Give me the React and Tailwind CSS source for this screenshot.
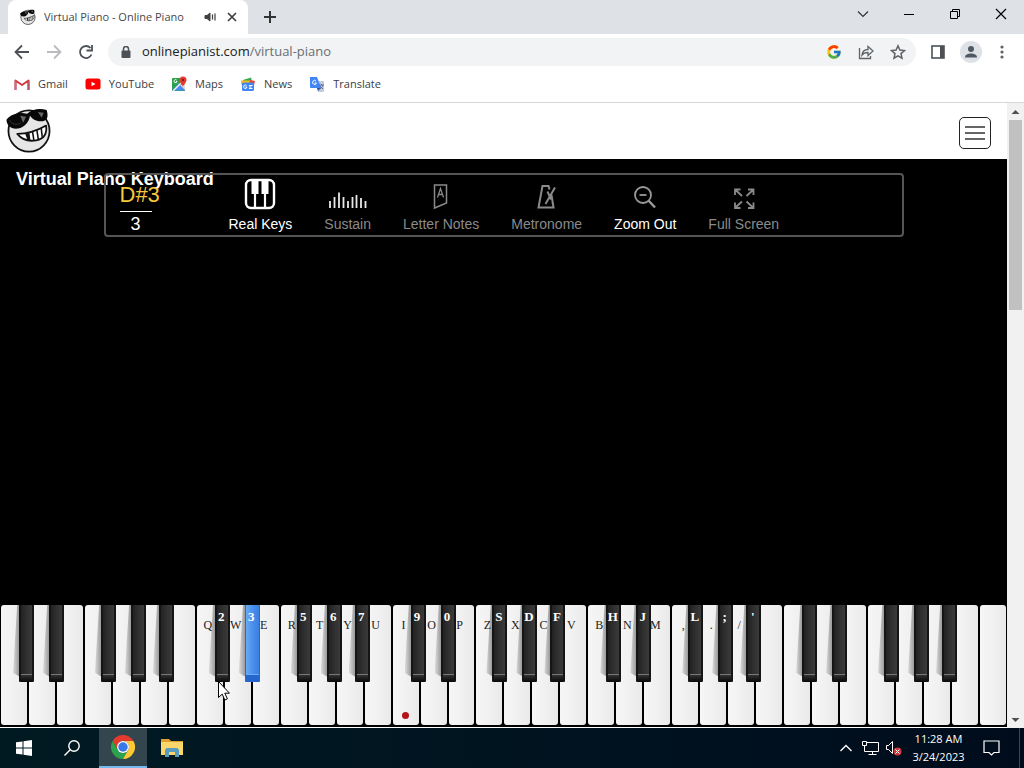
import React from 'react';
import { FcGoogle } from 'react-icons/fc';

const bookmarks = [
  { label: 'Gmail', icon: 'gmail' },
  { label: 'YouTube', icon: 'youtube' },
  { label: 'Maps', icon: 'maps' },
  { label: 'News', icon: 'news' },
  { label: 'Translate', icon: 'translate' },
];

const tools = [
  { label: 'Real Keys', icon: 'keys', active: true },
  { label: 'Sustain', icon: 'sustain' },
  { label: 'Letter Notes', icon: 'letters' },
  { label: 'Metronome', icon: 'metronome' },
  { label: 'Zoom Out', icon: 'zoom', active: true },
  { label: 'Full Screen', icon: 'full' },
];

const NOTES = ['C', 'D', 'E', 'F', 'G', 'A', 'B'];

// where the black key starts, measured from its white key
const SHARP_OFFSET = {
  C: 'left-[18px]',
  D: 'left-[20px]',
  F: 'left-[16px]',
  G: 'left-[18px]',
  A: 'left-[18px]',
};

// keyboard shortcuts start on the second octave
const WHITE_LABELS = ['Q', 'W', 'E', 'R', 'T', 'Y', 'U', 'I', 'O', 'P', 'Z', 'X', 'C', 'V', 'B', 'N', 'M', ',', '.', '/'];
const SHARP_LABELS = ['2', '3', '', '5', '6', '7', '', '9', '0', '', 'S', 'D', 'F', '', 'H', 'J', '', 'L', ';', "'"];

const keys = Array.from({ length: 36 }, (_, i) => ({
  id: i,
  note: NOTES[i % 7],
  octave: 2 + Math.floor(i / 7),
  label: WHITE_LABELS[i - 7] || '',
  sharpLabel: SHARP_LABELS[i - 7] || '',
  pressed: i === 8,
  middle: i === 14,
}));

const PianistLogo = ({ className }) => (
  <svg className={className} viewBox="6 7 46 47" fill="none">
    <circle cx="29" cy="31.500" r="21" fill="#e6e6e6" stroke="#111" strokeWidth="1.800" />
    <path d="M17 34.500c10 0 20-3 29.500-8.500 1 8-2 13.500-10 15-8 1.500-15-1-19.500-6.500z" fill="#fff" stroke="#111" strokeWidth="1.800" strokeLinejoin="round" />
    <path d="M32.500 31.500l1.500 9.500M37 30l1.500 10M41.500 28.500l1 9" stroke="#111" strokeWidth="1.600" />
    <path d="M25 34l4.500-.5 1 8-3-.5z" fill="#111" />
    <path d="M6 20C11 14 19 12 27 14c5-5 13-6 20-4 2 6 1 11-4 11.500-5 .5-10-1-13-5.500-1 7-6 12-12 13-8 1-12-4-12-9z" fill="#080808" />
    <path d="M20 16l6 1-3 6zM38 12l6 1-2 5z" fill="#666" />
    <path d="M9 20c2 5 8 6 12 3" stroke="#333" />
  </svg>
);

const BookmarkIcon = ({ name }) => {
  if (name === 'gmail') {
    return (
      <svg className="size-4" viewBox="0 0 16 16" fill="none">
        <path d="M1.500 14V4.500L8 9l6.500-4.500V14" stroke="#d93a3f" strokeWidth="2" strokeLinejoin="round" />
        <path d="M1.500 14V5.500" stroke="#b8768c" strokeWidth="2" />
        <path d="M14.500 14V5.500" stroke="#b05a6a" strokeWidth="2" />
      </svg>
    );
  }
  if (name === 'youtube') {
    return (
      <svg className="size-4" viewBox="0 0 16 16">
        <rect x="0.500" y="2.500" width="15" height="11" rx="2.500" fill="#f00" />
        <path d="M6.500 5.700v4.600l4-2.300z" fill="#fff" />
      </svg>
    );
  }
  if (name === 'maps') {
    return (
      <svg className="size-4" viewBox="0 0 16 16">
        <rect x="1" y="2" width="13" height="13" rx="1" fill="#2ba24c" />
        <path d="M1 14.500L8 7l6.500 7.500z" fill="#4a8af4" />
        <path d="M2 15L13 4" stroke="#f4f4f4" strokeWidth="1.500" />
        <path d="M9 9l5 5V8z" fill="#ddd" />
        <path d="M5.500 4A1.500 1.500 0 106 5.500H5" fill="none" stroke="#fff" />
        <path d="M12 11c0-2-3.500-4-3.500-7a3.500 3.500 0 017 0c0 3-3.500 5-3.500 7z" fill="#e33b2e" />
        <circle cx="12" cy="4" r="1.200" fill="#8c1a12" />
      </svg>
    );
  }
  if (name === 'news') {
    return (
      <svg className="size-4" viewBox="0 0 16 16">
        <path d="M3 4l8-2.500 1 4H3z" fill="#35a853" />
        <path d="M1 4.500h12v4H1z" fill="#f6bc1c" />
        <path d="M10 4l5 1-1 4H9z" fill="#e04a3c" />
        <rect x="2" y="6.500" width="12" height="8.500" rx="1.500" fill="#4285f4" />
        <path d="M6.500 9.500A1.700 1.700 0 107 11H5.500M9 9.500h3.500M9 11h2.500M9 12.500h3.500" fill="none" stroke="#fff" />
      </svg>
    );
  }
  return (
    <svg className="size-4" viewBox="0 0 16 16">
      <path d="M6 5h8a1 1 0 011 1v9a1 1 0 01-1 1h-5z" fill="#c3cae0" />
      <path d="M1 1h7l4 11H2a1 1 0 01-1-1z" fill="#4285f4" />
      <path d="M8 12h4l-3 3z" fill="#2c56a8" />
      <path d="M7 5A2 2 0 107.500 7H5.500" fill="none" stroke="#fff" />
      <path d="M10 9h5M12.500 8v1M14 9c0 2-2 3-3 4M11 10l3 3" fill="none" stroke="#5f6f9c" />
    </svg>
  );
};

const ToolIcon = ({ name }) => {
  switch (name) {
    case 'keys':
      return (
        <svg className="h-8 w-8" viewBox="0 0 32 32" fill="none">
          <rect x="2" y="2" width="28" height="28" rx="5" stroke="currentColor" strokeWidth="2.400" />
          <path d="M7.500 2h7v14h-7zM17.500 2h7v14h-7z" fill="currentColor" />
          <path d="M11 15v14M21 15v14" stroke="currentColor" strokeWidth="2.200" />
        </svg>
      );
    case 'sustain':
      return (
        <svg className="h-5 w-10" viewBox="0 0 40 20" stroke="#e8e8e8" strokeWidth="1.800">
          <path d="M2 11v7M6.500 7v11M11 2.500V18M15.500 7v11M20 11v7M24.500 7v11M28.500 5v13M33 8v10M37.500 11v7" />
        </svg>
      );
    case 'letters':
      return (
        <svg className="h-7 w-7" viewBox="0 0 28 28" fill="none" stroke="currentColor">
          <path d="M7.500 3h12v18l-12 5z" strokeWidth="1.500" />
          <path d="M10.500 15.500l3-9 3 9M11.500 12.500h4" strokeWidth="1.300" />
        </svg>
      );
    case 'metronome':
      return (
        <svg className="h-7 w-7" viewBox="0 0 28 28" fill="none" stroke="currentColor" strokeWidth="2">
          <path d="M16.500 7.500L15.500 4h-6L5.500 25.500h15L18.500 13M12.500 22L22 5.500M14.500 9.500l3.500 8" />
        </svg>
      );
    case 'zoom':
      return (
        <svg className="h-7 w-7" viewBox="0 0 28 28" fill="none" stroke="#999" strokeWidth="1.800">
          <circle cx="12" cy="13" r="8" />
          <path d="M8.500 13h7" />
          <path d="M17.500 18.500l6.500 7" strokeWidth="2.500" />
        </svg>
      );
    default:
      return (
        <svg className="h-7 w-7" viewBox="0 0 28 28" fill="none" stroke="currentColor" strokeWidth="1.800">
          <path d="M5 13V7.500h5.500M5 7.500l7 6.500M18 7.500h5.500V13M23.500 7.500l-7 6.500M5 20.500V26h5.500M5 26l7-6.500M23.500 20.500V26H18M23.500 26l-7-6.500" />
        </svg>
      );
  }
};

const TabStrip = () => (
  <div className="flex h-[34px] shrink-0 items-stretch bg-[#dee1e6] pl-2">
    <div className="flex w-60 items-center rounded-t-lg bg-white pr-2 pl-3">
      <PianistLogo className="mr-2 size-4 shrink-0" />
      <span className="flex-1 overflow-hidden whitespace-nowrap text-[11px] text-[#45494d]">
        Virtual Piano - Online Piano
      </span>
      <svg className="mr-2 ml-2 size-3 shrink-0" viewBox="0 0 12 12" fill="none" stroke="#3c4043">
        <path d="M1 4.500h2L6 2v8L3 7.500H1z" fill="#3c4043" />
        <path d="M8.500 3.500v5M11 2.500v7" strokeWidth="1.200" />
      </svg>
      <button aria-label="Close tab" className="flex size-4 items-center justify-center">
        <svg className="size-3" viewBox="0 0 12 12" stroke="#3c4043" strokeWidth="1.700">
          <path d="M2 2l8 8M10 2l-8 8" />
        </svg>
      </button>
    </div>
    <button aria-label="New tab" className="flex w-11 items-center justify-center">
      <svg className="size-3" viewBox="0 0 12 12" stroke="#333" strokeWidth="2">
        <path d="M6 0v12M0 6h12" />
      </svg>
    </button>
    <div className="ml-auto flex items-center pb-1.5">
      <button aria-label="Search tabs" className="flex w-[46px] justify-center">
        <svg className="size-3" viewBox="0 0 12 12" fill="none" stroke="#333" strokeWidth="1.200">
          <path d="M1 3.500l5 5 5-5" />
        </svg>
      </button>
      <button aria-label="Minimize" className="flex w-[46px] justify-center">
        <svg className="size-3" viewBox="0 0 12 12" stroke="#000">
          <path d="M1 6.500h10" />
        </svg>
      </button>
      <button aria-label="Restore" className="flex w-[46px] justify-center">
        <svg className="size-3" viewBox="0 0 12 12" fill="none" stroke="#000">
          <path d="M1.500 3.500h7v7h-7zM3.500 3.500v-2h7v7h-2" />
        </svg>
      </button>
      <button aria-label="Close" className="flex w-[46px] justify-center">
        <svg className="size-3" viewBox="0 0 12 12" stroke="#000" strokeWidth="1.200">
          <path d="M1 1l10 10M11 1L1 11" />
        </svg>
      </button>
    </div>
  </div>
);

const AddressBar = () => (
  <div className="flex h-9 shrink-0 items-center px-3.5">
    <div className="flex items-center gap-4">
      <button aria-label="Back">
        <svg className="size-4" viewBox="0 0 16 16" fill="none" stroke="#4d5156" strokeWidth="1.800">
          <path d="M15 8H2M8 1.500L1.500 8 8 14.500" />
        </svg>
      </button>
      <button aria-label="Forward">
        <svg className="size-4" viewBox="0 0 16 16" fill="none" stroke="#b9bbbe" strokeWidth="1.800">
          <path d="M1 8h13M8 1.500L14.500 8 8 14.500" />
        </svg>
      </button>
      <button aria-label="Reload">
        <svg className="size-4" viewBox="0 0 16 16" fill="none" stroke="#4d5156" strokeWidth="1.800">
          <path d="M13.500 10.500A6 6 0 1112.500 4M14 1v5.500H8.500" />
        </svg>
      </button>
    </div>
    <div className="ml-3.5 flex h-7 flex-1 items-center rounded-full bg-[#f1f3f4] pr-2.5 pl-3">
      <svg className="size-3" viewBox="0 0 12 12" fill="none">
        <rect x="1.500" y="4.500" width="9" height="7.500" rx="1" fill="#4d5156" />
        <path d="M3.500 5V3a2.500 2.500 0 015 0v2" stroke="#4d5156" strokeWidth="1.500" />
      </svg>
      <a href="#address" className="ml-2.5 flex-1 text-[13px] text-[#202124]">
        onlinepianist.com<span className="text-[#6a6e73]">/virtual-piano</span>
      </a>
      <div className="flex items-center gap-4">
        <button aria-label="Search with Google">
          <FcGoogle className="size-4" />
        </button>
        <button aria-label="Share">
          <svg className="size-4" viewBox="0 0 16 16" fill="none" stroke="#5f6368" strokeWidth="1.300">
            <path d="M1.500 4v10.500h11V12M4 11c.5-4 3-5.500 6-5.500V2.500L15 7l-5 4.500V8.500c-3 0-4.500.5-6 2.500z" />
          </svg>
        </button>
        <button aria-label="Bookmark this tab">
          <svg className="size-4" viewBox="0 0 16 16" fill="none" stroke="#5f6368" strokeWidth="1.500">
            <path d="M8 1.800l1.900 4.300 4.600.4-3.500 3.100 1 4.600L8 11.800l-4 2.400 1-4.600L1.500 6.500l4.600-.4z" />
          </svg>
        </button>
      </div>
    </div>
    <div className="ml-3.5 flex items-center">
      <button aria-label="Side panel">
        <svg className="size-4" viewBox="0 0 16 16" fill="none">
          <rect x="2" y="2" width="12" height="12" stroke="#4d5156" strokeWidth="1.600" />
          <path d="M10 2h4v12h-4z" fill="#4d5156" />
        </svg>
      </button>
      <button aria-label="Profile" className="ml-3.5 flex size-[22px] items-center justify-center rounded-full bg-[#dee1e6]">
        <svg className="size-4" viewBox="0 0 16 16" fill="#4d5a66">
          <circle cx="8" cy="5" r="3" />
          <path d="M2 13.500c0-3 3-4 6-4s6 1 6 4z" />
        </svg>
      </button>
      <button aria-label="Menu" className="ml-3">
        <svg className="size-4" viewBox="0 0 16 16" fill="#5f6368">
          <circle cx="8" cy="3" r="1.600" />
          <circle cx="8" cy="8" r="1.600" />
          <circle cx="8" cy="13" r="1.600" />
        </svg>
      </button>
    </div>
  </div>
);

const BookmarkBar = () => (
  <nav className="flex h-[33px] shrink-0 items-center gap-[17px] border-b border-[#d5d7da] px-3.5 pb-1">
    {bookmarks.map((item) => (
      <a key={item.label} href={`#${item.icon}`} className="flex items-center gap-2 text-[11px] text-[#3c4043]">
        <BookmarkIcon name={item.icon} />
        {item.label}
      </a>
    ))}
  </nav>
);

const SiteHeader = () => (
  <header className="flex h-14 shrink-0 items-center justify-between bg-white pr-4 pl-1.5">
    <a href="#home" aria-label="Online Pianist" className="pb-0.5">
      <PianistLogo className="size-[46px]" />
    </a>
    <button aria-label="Open menu" className="mt-1 flex size-8 items-center justify-center rounded-[5px] border border-[#222]">
      <svg className="size-5" viewBox="0 0 20 20" stroke="#333" strokeWidth="1.500">
        <path d="M0 4h20M0 10h20M0 16h20" />
      </svg>
    </button>
  </header>
);

const PianoToolbar = () => (
  <div className="relative mx-auto mt-3.5 flex h-16 w-[800px] max-w-full rounded border-2 border-[#555] pl-3.5">
    <div className="w-[109px] text-white">
      <div className="mt-2 h-7 text-[22px] leading-6 text-[#f5c93b]">D#3</div>
      <div className="flex w-8 justify-center border-t border-white text-lg leading-6">3</div>
    </div>
    <div className="flex gap-8">
      {tools.map((tool) => (
        <button
          key={tool.label}
          className={`flex flex-col items-center whitespace-nowrap text-sm ${
            tool.active ? 'text-white' : 'text-[#8a8a8a]'
          }`}
        >
          <span className="flex h-[35px] items-end justify-center">
            <ToolIcon name={tool.icon} />
          </span>
          <span className="mt-1 leading-5">{tool.label}</span>
        </button>
      ))}
    </div>
  </div>
);

const PianoKey = ({ item }) => {
  const offset = SHARP_OFFSET[item.note];
  const hasSharp = offset && item.id !== 35;

  // stacking goes shadow, shortcut label, black key
  return (
    <div className="relative flex-1 border-x border-black">
      <button
        aria-label={`${item.note}${item.octave}`}
        className="flex h-[120px] w-full flex-col items-start justify-between rounded-[3px] bg-linear-to-r from-[#f6f6f6] via-[#f1f1f1] to-[#e9e9e9] pt-3 pb-1.5 font-['Liberation_Serif',serif] text-xs text-[#222]"
      >
        <span className="relative z-10 h-4 w-[22px] text-center leading-4">{item.label}</span>
        {item.middle && <span className="ml-[9px] size-[7px] rounded-full bg-[#b5121b]" />}
      </button>
      {hasSharp && (
        <div className={`absolute top-0 h-[77px] w-[15px] ${offset}`}>
          <span className="absolute top-0 -left-[6px] h-[72px] w-[7px] bg-linear-to-r from-[#dcdcdc] to-[#909090] [clip-path:polygon(60%_0,100%_0,100%_100%,0_94%)]" />
          <button
            aria-label={`${item.note}#${item.octave}`}
            className={`relative z-20 flex h-full w-full justify-center rounded-b-[1px] pt-1 font-['Liberation_Serif',serif] text-[13px] leading-4 font-bold text-white ${
              item.pressed
                ? 'border-x border-[#2b67c4] bg-linear-to-r from-[#69a9f5] via-[#4a90ee] to-[#3b7fe0]'
                : 'border-x-2 border-[#151515] bg-linear-to-r from-[#222] via-[#303030] to-[#3a3a3a]'
            }`}
          >
            <span
              className={`absolute inset-x-0 bottom-0 h-2 border-t ${
                item.pressed ? 'border-[#6cacfa] bg-[#2765ce]' : 'border-[#777] bg-linear-to-b from-[#333] to-[#080808]'
              }`}
            />
            <span className="relative -ml-0.5">{item.sharpLabel}</span>
          </button>
        </div>
      )}
    </div>
  );
};

const MousePointer = () => (
  <svg className="pointer-events-none absolute bottom-[26px] left-[218px] z-30 h-5 w-3" viewBox="0 0 12 20">
    <path d="M.5.500v16l3.700-3.400 2.600 5.900 2.600-1.100-2.600-5.700h4.700z" fill="#fff" stroke="#000" />
  </svg>
);

const Scrollbar = () => (
  <div className="flex w-[17px] shrink-0 flex-col items-center bg-[#f1f1f1]">
    <svg className="h-[17px] w-[17px]" viewBox="0 0 17 17" fill="#505050">
      <path d="M4.500 11l4-4 4 4z" />
    </svg>
    <div className="h-[190px] w-[13px] bg-[#c1c1c1]" />
    <svg className="mt-auto h-[17px] w-[17px]" viewBox="0 0 17 17" fill="#505050">
      <path d="M4.500 7l4 4 4-4z" />
    </svg>
  </div>
);

const Taskbar = () => (
  <footer className="flex h-10 shrink-0 items-stretch bg-linear-to-r from-[#001a22] via-[#001420] to-[#000c1c] text-white">
    <button aria-label="Start" className="flex w-12 items-center justify-center">
      <svg className="size-4" viewBox="0 0 16 16" fill="#fff">
        <path d="M0 2.300L6.500 1.400v6.100H0zM7.500 1.200L16 0v7.500H7.500zM0 8.500h6.500v6.100L0 13.700zM7.500 8.500H16V16l-8.500-1.200z" />
      </svg>
    </button>
    <button aria-label="Search" className="mr-[3px] flex w-12 items-center justify-center">
      <svg className="size-4" viewBox="0 0 16 16" fill="none" stroke="#fff" strokeWidth="1.400">
        <circle cx="10" cy="6" r="5.200" />
        <path d="M6.200 9.800L.5 15.500" />
      </svg>
    </button>
    <button aria-label="Google Chrome" className="flex w-12 items-center justify-center border-b-2 border-[#76b9ed] bg-[#33464e]">
      <svg className="size-6" viewBox="0 0 48 48">
        <path d="M3.200 12A24 24 0 0144.800 12H24a12 12 0 00-10.400 18z" fill="#e33b2e" />
        <path d="M3.200 12l10.400 18a12 12 0 0020.800 0L24 48A24 24 0 013.200 12z" fill="#2ba24c" />
        <path d="M44.800 12A24 24 0 0124 48l10.400-18A12 12 0 0024 12z" fill="#fcc934" />
        <circle cx="24" cy="24" r="12" fill="#fff" />
        <circle cx="24" cy="24" r="9.500" fill="#3b78e7" />
      </svg>
    </button>
    <button aria-label="File Explorer" className="ml-px flex w-12 items-center justify-center">
      <svg className="h-5 w-[22px]" viewBox="0 0 22 20">
        <path d="M0 1h8l2 2h12v5H0z" fill="#e0a030" />
        <path d="M0 4h22v13H0z" fill="#fbd76b" />
        <path d="M4 19v-7l1.500-2h11l1.500 2v7h-4v-5H8v5z" fill="#5a9cc0" />
      </svg>
    </button>
    <div className="ml-auto flex items-center">
      <button aria-label="Show hidden icons" className="w-6">
        <svg className="mx-auto size-3" viewBox="0 0 12 12" fill="none" stroke="#fff" strokeWidth="1.300">
          <path d="M.5 9L6 3.500 11.500 9" />
        </svg>
      </button>
      <svg className="mr-1.5 ml-1 h-4 w-[17px]" viewBox="0 0 17 16" fill="none" stroke="#fff">
        <path d="M4.500 2.500h12v9h-12M.5 1.500h4v4h-4zM2.500 5.500v6h4M10.500 11.500v3M6.500 14.500h8" />
      </svg>
      <svg className="h-4 w-[17px]" viewBox="0 0 17 16" fill="none" stroke="#fff">
        <path d="M1.500 5.500h2l4-4v12l-4-4h-2z" />
        <circle cx="12.500" cy="11.500" r="4" fill="#c93a3f" stroke="none" />
        <path d="M10.500 9.500l4 4M14.500 9.500l-4 4" />
      </svg>
      <div className="ml-2 w-[57px] text-center text-[11px] leading-[18px] whitespace-nowrap">
        <div>11:28 AM</div>
        <div>3/24/2023</div>
      </div>
      <button aria-label="Notifications" className="ml-4 w-[17px]">
        <svg className="h-4 w-[17px]" viewBox="0 0 17 16" fill="none" stroke="#fff" strokeWidth="1.200">
          <path d="M1 1h15v11.500h-5L8.500 15 6 12.500H1z" />
        </svg>
      </button>
      <div className="mr-1 ml-[19px] h-10 w-px bg-[#3a4652]" />
    </div>
  </footer>
);

const App = () => {
  return (
    <div className="flex h-screen flex-col overflow-hidden bg-white font-['Open_Sans',sans-serif]">
      <TabStrip />
      <AddressBar />
      <BookmarkBar />
      <div className="flex min-h-0 flex-1">
        <div className="flex min-w-0 flex-1 flex-col font-['Liberation_Sans',Arial,sans-serif]">
          <SiteHeader />
          <main className="relative flex flex-1 flex-col border-b border-white bg-black">
            <h1 className="absolute top-2 left-4 text-lg leading-6 font-bold text-white">Virtual Piano Keyboard</h1>
            <PianoToolbar />
            <div className="mt-auto flex pb-0.5">
              {keys.map((item) => (
                <PianoKey key={item.id} item={item} />
              ))}
            </div>
            <MousePointer />
          </main>
        </div>
        <Scrollbar />
      </div>
      <Taskbar />
    </div>
  );
};

export default App;
